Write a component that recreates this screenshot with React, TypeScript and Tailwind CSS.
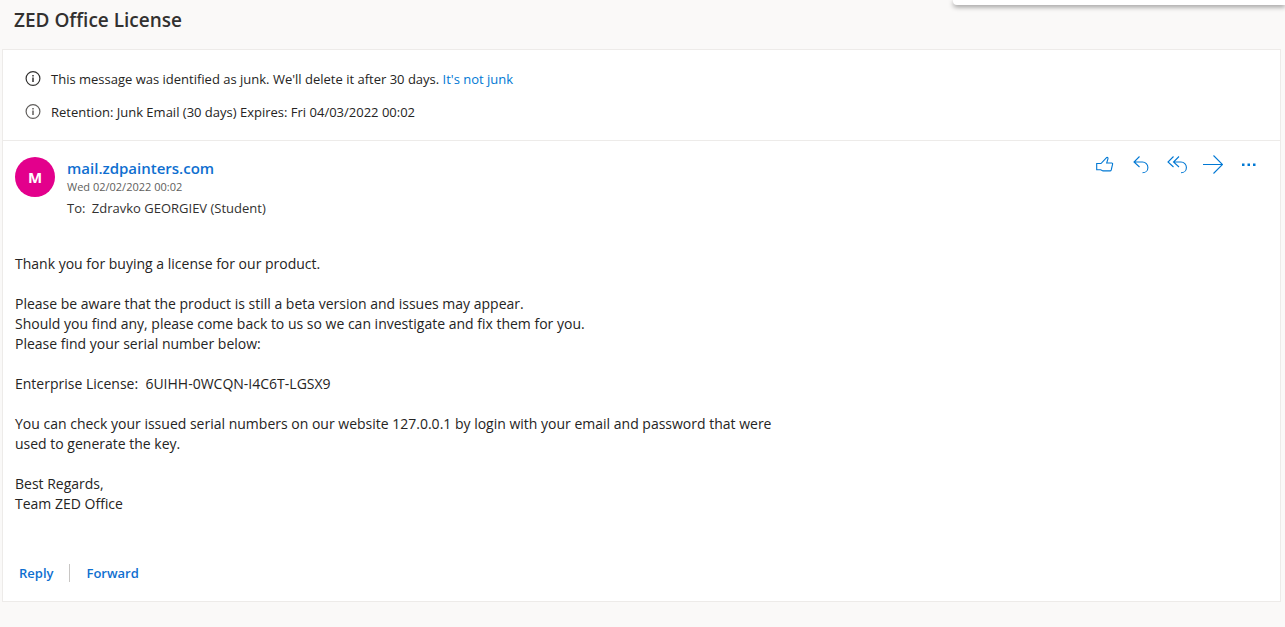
import type { ReactNode } from 'react';

function InfoIcon({ className }: { className: string }) {
  return (
    <svg viewBox="0 0 16 16" fill="none" stroke="currentColor" aria-hidden="true" className={`size-4 shrink-0 ${className}`}>
      <circle cx="8" cy="7.500" r="6.900" strokeWidth="1.2" />
      <path d="M8 6.500v4.500M8 4v1.500" strokeWidth="1.5" />
    </svg>
  );
}

const actions: { label: string; drawing: ReactNode }[] = [
  {
    label: 'Like',
    drawing: (
      <path d="M1.700 9.500h4.300l5.300-5.700c.8-.8 2-.1 1.700.9L11.700 9h5c.7 0 1.100.5.9 1.200L16.200 16c-.2.6-.6.900-1.200.900H8l-2.300-1.200H1.700z" />
    ),
  },
  {
    label: 'Reply',
    drawing: <path d="M8.500 2.500 3 8l5.500 5M3 8h8.500a5.400 5.400 0 0 1 5.400 5.400c0 3-2.200 5.400-5.400 5.400" />,
  },
  {
    label: 'Reply all',
    drawing: <path d="M6.500 2.500 1 8l5.500 5M12 2.500 6.500 8l5.500 5M6.500 8H14a5.400 5.400 0 0 1 5.400 5.400c0 3-2.200 5.400-5.400 5.400" />,
  },
  { label: 'Forward', drawing: <path d="M0 10.500h19.500M10.500 1.500l9 9-9 9" /> },
  {
    label: 'More actions',
    drawing: <path d="M3 9.500h2.500V12H3zM8.500 9.500H11V12H8.500zM14 9.500h2.500V12H14z" fill="currentColor" stroke="none" />,
  },
];

export default function App() {
  return (
    <div className="relative min-h-screen overflow-hidden bg-[#faf9f8] pb-6 font-['Open_Sans','Noto_Sans',sans-serif] text-[#252423]">
      <div className="absolute top-0 right-0 h-[5px] w-[332px] rounded-bl-sm bg-white shadow-[0_2px_5px_rgba(0,0,0,0.4)]" />
      <header className="flex h-[49px] items-start px-3.5 pt-2">
        <h1 className="text-[19px] leading-6 font-semibold text-[#323130]">ZED Office License</h1>
      </header>

      <main className="mr-1 ml-0.5 border border-[#edebe9] bg-white">
        <section className="flex h-[91px] flex-col gap-[13px] border-b border-[#edebe9] px-[22px] pt-[19px] text-[13px] leading-5">
          <div className="flex items-center gap-2.5">
            <InfoIcon className="text-[#323130]" />
            <p>
              This message was identified as junk. We'll delete it after 30 days.{' '}
              <a href="#not-junk" className="text-[#0078d4]">It's not junk</a>
            </p>
          </div>
          <div className="flex items-center gap-2.5">
            <InfoIcon className="text-[#605e5c]" />
            <p>Retention: Junk Email (30 days) Expires: Fri 04/03/2022 00:02</p>
          </div>
        </section>

        <article className="px-3 pt-4">
          <div className="flex items-start justify-between">
            <div className="flex gap-3">
              <div className="flex size-10 items-center justify-center rounded-full bg-[#e3008c] text-[15px] font-bold text-white">
                M
              </div>
              <div>
                <a href="#sender" className="block text-[15px] leading-[22px] font-semibold text-[#0f6fd0]">
                  mail.zdpainters.com
                </a>
                <p className="text-[11px] leading-4 text-[#605e5c]">Wed 02/02/2022 00:02</p>
                <p className="pt-[3px] text-[13px] leading-5 text-[#323130]">
                  To: <span className="pl-[3px]">Zdravko GEORGIEV (Student)</span>
                </p>
              </div>
            </div>
            <div className="-mt-[3px] mr-[9px] flex gap-4 text-[#0078d4]">
              {actions.map(({ label, drawing }) => (
                <button key={label} type="button" aria-label={label} className="size-5">
                  <svg viewBox="0 0 20 20" fill="none" stroke="currentColor" strokeWidth="1.1" className="size-5">
                    {drawing}
                  </svg>
                </button>
              ))}
            </div>
          </div>

          <div className="flex flex-col gap-5 pt-9 text-sm leading-5">
            <p>Thank you for buying a license for our product.</p>
            <p>
              Please be aware that the product is still a beta version and issues may appear.
              <br />
              Should you find any, please come back to us so we can investigate and fix them for you.
              <br />
              Please find your serial number below:
            </p>
            <p>Enterprise License:&nbsp; 6UIHH-0WCQN-I4C6T-LGSX9</p>
            <p>
              You can check your issued serial numbers on our website 127.0.0.1 by login with your email and password that were
              <br />
              used to generate the key.
            </p>
            <p>
              Best Regards,
              <br />
              Team ZED Office
            </p>
          </div>

          <footer className="flex items-center px-1 pt-[49px] pb-[18px] text-[13px] leading-5 font-semibold text-[#0f6fd0]">
            <button type="button" className="pr-4">Reply</button>
            <div className="h-[18px] w-px bg-[#c8c6c4]" />
            <button type="button" className="pl-4">Forward</button>
          </footer>
        </article>
      </main>
    </div>
  );
}
